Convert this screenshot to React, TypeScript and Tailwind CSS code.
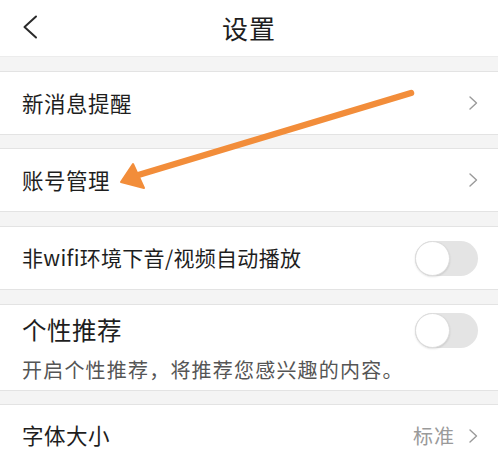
import React from "react";

const font = { fontFamily: '"Noto Sans CJK SC", "Noto Sans", sans-serif' };

function Chevron() {
  return (
    <svg width="9" height="14" viewBox="0 0 9 14" fill="none">
      <path d="M1 1 L7.5 7 L1 13" stroke="#9a9a9a" strokeWidth="1.4" strokeLinecap="round" strokeLinejoin="round" />
    </svg>
  );
}

function Toggle() {
  return (
    <div className="relative h-[35px] w-[63px] rounded-full bg-[#e4e4e4]">
      <div className="absolute left-0 top-0 h-[35px] w-[35px] rounded-full border border-[#dcdcdc] bg-white shadow-[0_1px_2px_rgba(0,0,0,0.12)]" />
    </div>
  );
}

export default function App() {
  return (
    <div className="relative h-[450px] w-[498px] overflow-hidden bg-[#f4f4f4] text-[#1e1e1e]" style={font}>
      <div className="flex h-[57px] items-center border-b border-[#ececec] bg-white px-[22px]">
        <svg width="16" height="24" viewBox="0 0 16 24" fill="none" className="mt-[-2px]">
          <path d="M14 1.5 L2.5 12 L14 22.5" stroke="#2a2a2a" strokeWidth="2" strokeLinecap="round" strokeLinejoin="round" />
        </svg>
        <div className="flex-1 pr-[16px] text-center text-[26px] leading-none tracking-[1px]">设置</div>
      </div>

      <div className="mt-[14px] flex h-[64px] items-center justify-between border-y border-[#e3e3e3] bg-white pl-[22px] pr-[20px]">
        <span className="text-[21.5px] tracking-[0.5px]">新消息提醒</span>
        <Chevron />
      </div>

      <div className="mt-[13px] flex h-[64px] items-center justify-between border-y border-[#e3e3e3] bg-white pl-[22px] pr-[20px]">
        <span className="text-[21.5px] tracking-[0.5px]">账号管理</span>
        <Chevron />
      </div>

      <div className="mt-[14px] flex h-[64px] items-center justify-between border-y border-[#e3e3e3] bg-white pl-[22px] pr-[20px]">
        <span className="text-[21px] tracking-[0.3px]">非wifi环境下音/视频自动播放</span>
        <Toggle />
      </div>

      <div className="mt-[14px] flex h-[87px] flex-col border-y border-[#e3e3e3] bg-white pl-[22px] pr-[20px]">
        <div className="mt-[7px] flex items-center justify-between">
          <span className="text-[24.5px] leading-[36px] tracking-[0.5px]">个性推荐</span>
          <Toggle />
        </div>
        <span className="mt-[10px] text-[20px] leading-[24px] tracking-[1.2px] text-[#555]">开启个性推荐，将推荐您感兴趣的内容。</span>
      </div>

      <div className="mt-[13px] flex h-[64px] items-center justify-between border-t border-[#e3e3e3] bg-white pl-[22px] pr-[20px]">
        <span className="mt-[-2px] text-[21.5px] tracking-[0.5px]">字体大小</span>
        <div className="mt-[-2px] flex items-center gap-[14px]">
          <span className="text-[20px] tracking-[1px] text-[#9a9a9a]">标准</span>
          <Chevron />
        </div>
      </div>

      <svg className="pointer-events-none absolute left-0 top-0" width="498" height="450" viewBox="0 0 498 450">
        <line x1="411" y1="93" x2="135" y2="176" stroke="#f28d3a" strokeWidth="6.5" strokeLinecap="round" />
        <polygon points="121,182 133,164 144,188" fill="#f28d3a" stroke="#f28d3a" strokeWidth="2" strokeLinejoin="round" />
      </svg>
    </div>
  );
}
